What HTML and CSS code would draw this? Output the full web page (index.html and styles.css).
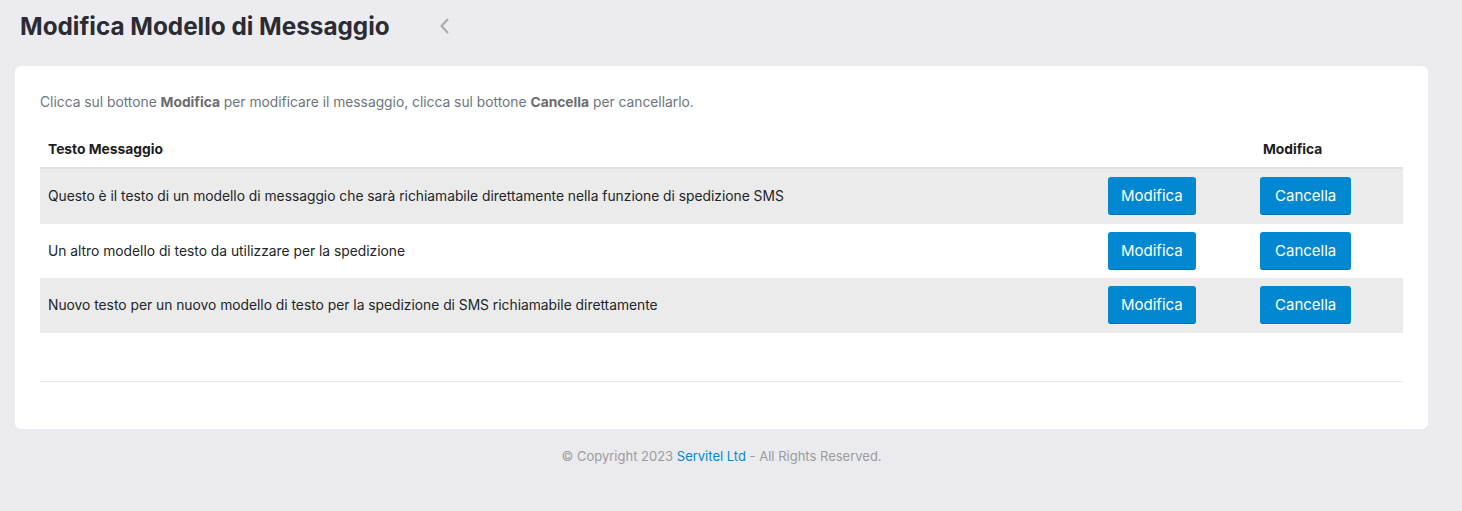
FILE: index.html
```html
<!DOCTYPE html>
<html lang="it">
<head>
<meta charset="utf-8">
<title>Modifica Modello di Messaggio</title>
<link rel="stylesheet" href="styles.css">
</head>
<body>
<header class="topbar">
  <h1 class="page-title">Modifica Modello di Messaggio</h1>
  <span class="back">
    <svg width="11" height="18" viewBox="0 0 11 18"><path d="M9 2 L2.5 9 L9 16" fill="none" stroke="#a9a9ad" stroke-width="2"/></svg>
  </span>
</header>
<main class="content">
  <section class="card">
    <p class="intro">Clicca sul bottone <b>Modifica</b> per modificare il messaggio, clicca sul bottone <b>Cancella</b> per cancellarlo.</p>
    <table class="tbl">
      <thead>
        <tr><th class="c-text">Testo Messaggio</th><th class="c-btn1"></th><th class="c-btn2">Modifica</th></tr>
      </thead>
      <tbody>
        <tr><td>Questo è il testo di un modello di messaggio che sarà richiamabile direttamente nella funzione di spedizione SMS</td><td><button class="btn">Modifica</button></td><td><button class="btn btn-del">Cancella</button></td></tr>
        <tr><td>Un altro modello di testo da utilizzare per la spedizione</td><td><button class="btn">Modifica</button></td><td><button class="btn btn-del">Cancella</button></td></tr>
        <tr><td>Nuovo testo per un nuovo modello di testo per la spedizione di SMS richiamabile direttamente</td><td><button class="btn">Modifica</button></td><td><button class="btn btn-del">Cancella</button></td></tr>
      </tbody>
    </table>
    <hr class="sep">
  </section>
  <footer class="footer">© Copyright 2023 <a href="#">Servitel Ltd</a> - All Rights Reserved.</footer>
</main>
</body>
</html>
```
FILE: styles.css
```css
html, body { margin: 0; padding: 0; }
body {
  background: #ebebef;
  font-family: "Inter", "Open Sans", sans-serif;
  color: #212529;
  width: 1462px;
  height: 511px;
  overflow: hidden;
}
.topbar {
  height: 52px;
  display: flex;
  align-items: center;
  padding-left: 20px;
  background: #ececf0;
}
.page-title {
  margin: 0;
  font-size: 24.3px;
  font-weight: 700;
  color: #2b2b33;
}
.back { margin-left: 49px; display: flex; align-items: center; }
.content { padding: 14px 34px 0 15px; }
.card {
  background: #fff;
  border-radius: 6px;
  padding: 28px 25px 47px 25px;
}
.intro {
  margin: 0 0 22px 0;
  font-size: 13.8px;
  color: #6c757d;
}
.intro b { color: #6c6c72; font-weight: 700; }
.tbl {
  width: 100%;
  border-collapse: collapse;
  font-size: 13.8px;
}
.tbl th {
  text-align: left;
  font-weight: 700;
  padding: 9px 8px 10px 8px;
  border-bottom: 2px solid #dee2e6;
  color: #1d1d22;
}
.c-btn1 { width: 139px; }
.c-btn2 { width: 132px; }
.tbl td { padding: 8px 8px; height: 38.5px; }
.tbl tbody tr:nth-child(odd) { background: #ebebeb; }
.btn {
  background: #0288d1;
  color: #fff;
  border: none;
  border-bottom: 1px solid #0272b0;
  border-radius: 3px;
  font-family: inherit;
  font-size: 15px;
  padding: 0 13px;
  height: 38px;
  display: block;
}
.btn-del { margin-left: -3px; padding: 0 15px; }
.sep {
  border: 0;
  border-top: 1px solid #ebebeb;
  margin: 48px 0 0 0;
}
.footer {
  text-align: center;
  font-size: 13px;
  color: #9b9b9b;
  padding-top: 19px;
}
.footer a { color: #0288d1; text-decoration: none; }
```
